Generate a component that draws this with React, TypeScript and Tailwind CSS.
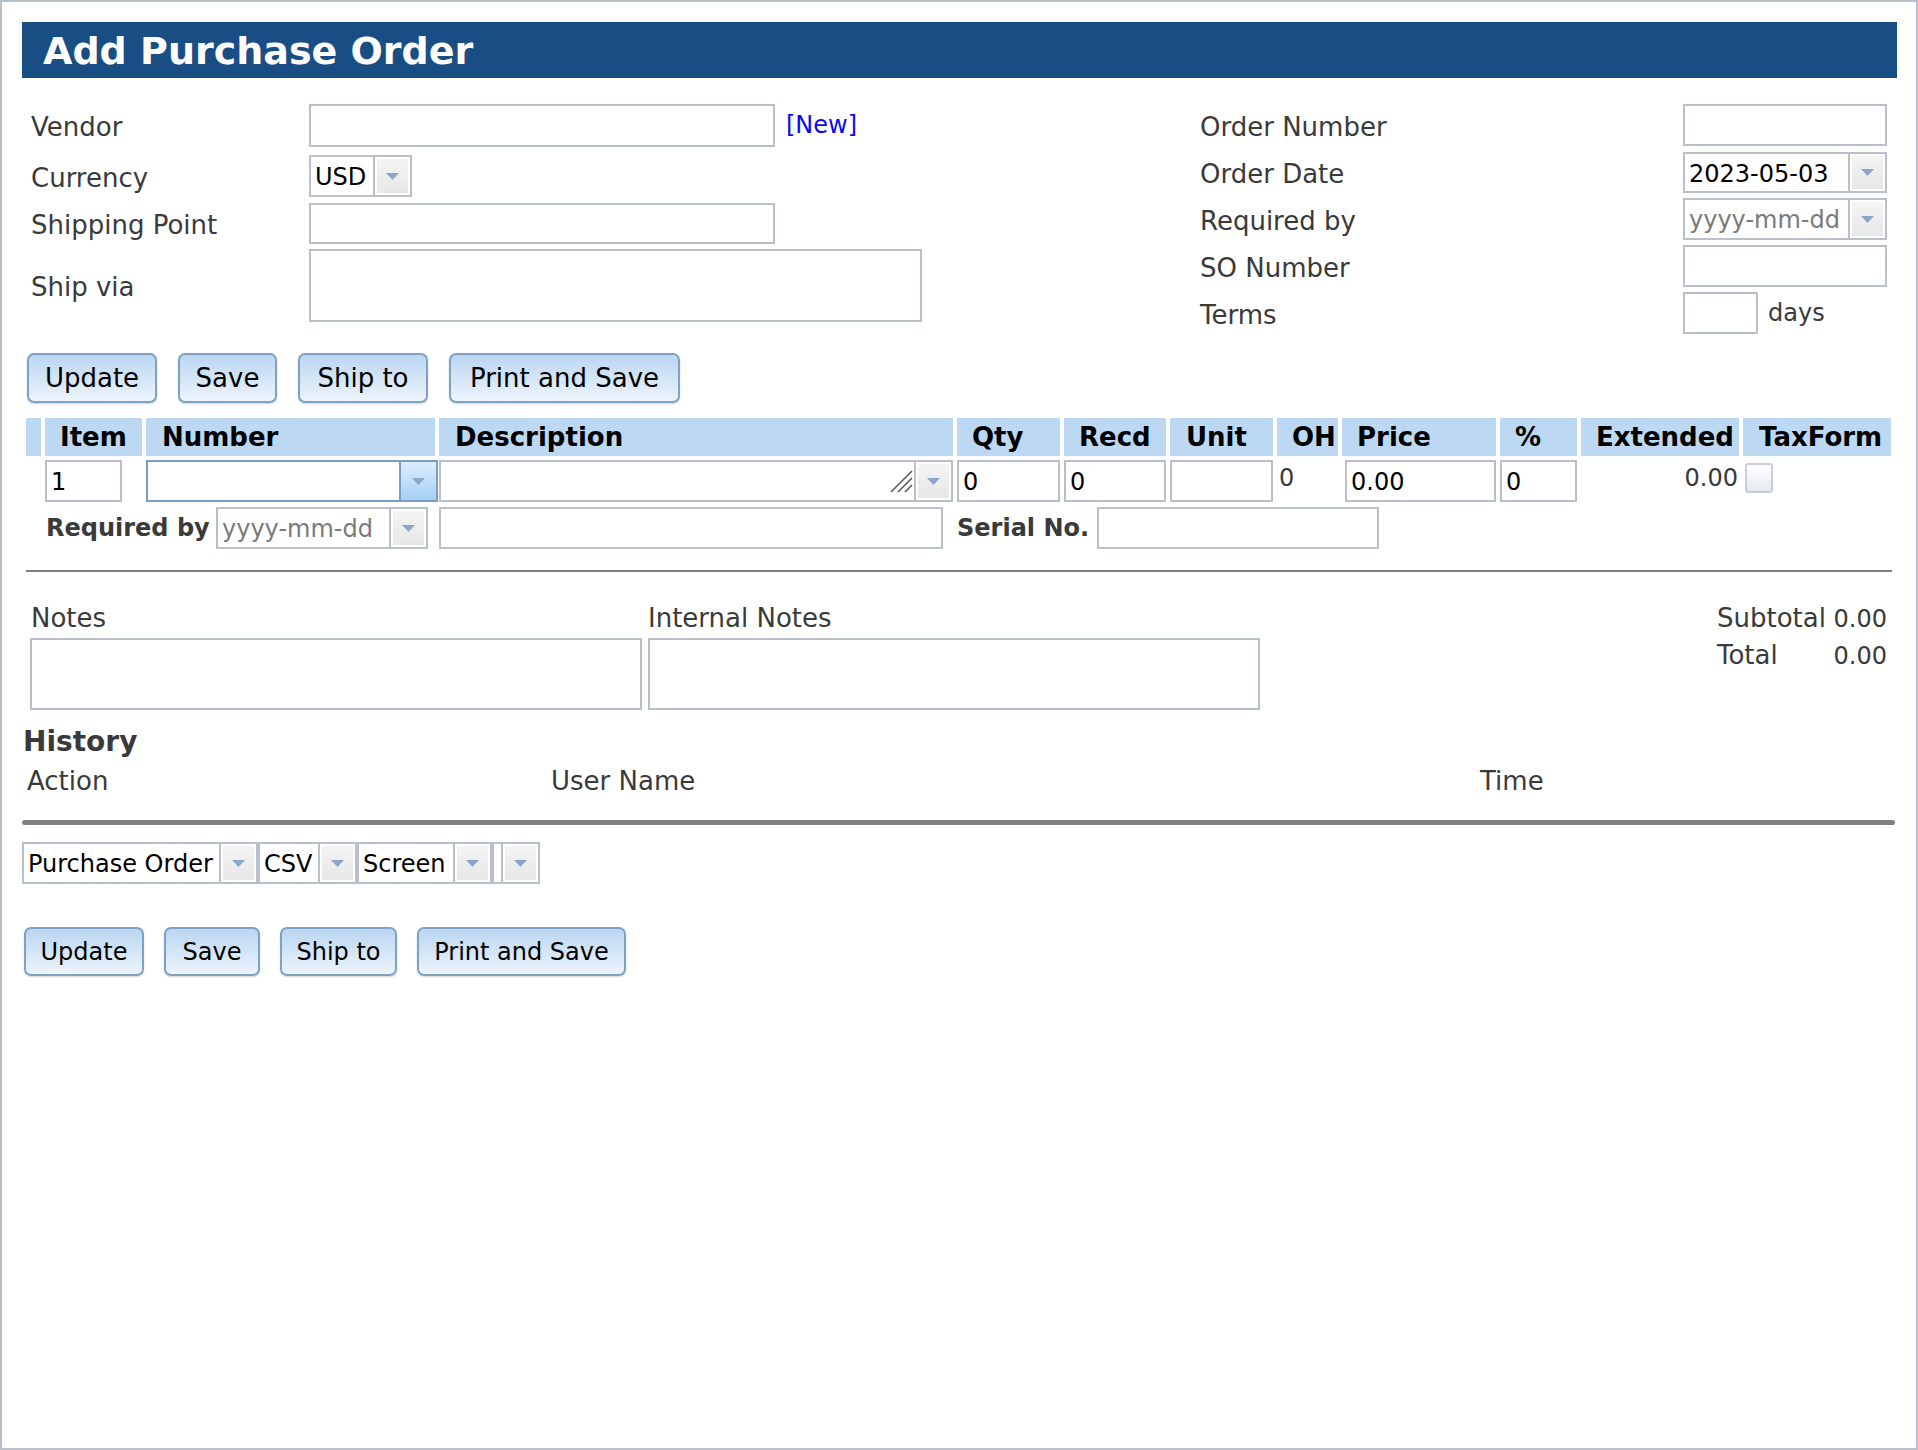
import type { ReactNode } from 'react';

function Arrow() {
    return (
        <svg width="13" height="7" viewBox="0 0 13 7">
            <path d="M0 0h13L6.5 7z" fill="#8ea5ca" />
        </svg>
    );
}

function DropButton({ active }: { active?: boolean }) {
    if (active) {
        return (
            <div className="flex h-full w-[37px] shrink-0 items-center justify-center border-l-2 border-[#7b9dc1] bg-gradient-to-b from-[#dbeefe] to-[#a6d0f6]">
                <Arrow />
            </div>
        );
    }
    return (
        <div className="flex h-full w-[37px] shrink-0 border-l-2 border-[#b9c0cc] bg-white p-[2px]">
            <div className="flex flex-1 items-center justify-center bg-gradient-to-b from-[#f4f4f4] to-[#e7e7e7]">
                <Arrow />
            </div>
        </div>
    );
}

function Field({ className, children }: { className: string; children?: ReactNode }) {
    return (
        <div
            className={
                'flex shrink-0 items-center border-2 border-[#b9c0cc] bg-white pt-[2px] pl-[4px] text-[24px] leading-[28px] whitespace-nowrap text-black ' +
                className
            }
        >
            {children}
        </div>
    );
}

function Combo({
    className,
    value,
    placeholder,
    active,
    grip,
}: {
    className: string;
    value?: string;
    placeholder?: string;
    active?: boolean;
    grip?: boolean;
}) {
    return (
        <div
            className={
                'flex shrink-0 border-2 bg-white text-[24px] leading-[28px] whitespace-nowrap ' +
                (active ? 'border-[#7b9dc1] ' : 'border-[#b9c0cc] ') +
                className
            }
        >
            <div className="relative flex flex-1 items-center overflow-hidden pt-[2px] pl-[4px]">
                {value && <span className="text-black">{value}</span>}
                {placeholder && <span className="text-[#7a7a7a]">{placeholder}</span>}
                {grip && (
                    <svg
                        className="absolute right-[1px] bottom-[7px]"
                        width="25"
                        height="25"
                        viewBox="0 0 25 25"
                    >
                        <path
                            d="M24 3L3 24M24 10L10 24M24 17L17 24"
                            stroke="#5a5a5a"
                            strokeWidth="1.6"
                        />
                    </svg>
                )}
            </div>
            <DropButton active={active} />
        </div>
    );
}

function Btn({ className, children }: { className: string; children: ReactNode }) {
    return (
        <button
            className={
                'flex shrink-0 items-center justify-center rounded-[7px] border-2 border-[#7ea2c6] bg-gradient-to-b from-[#bad6f1] to-[#edf4fc] whitespace-nowrap text-black shadow-[0_1px_2px_rgba(0,0,0,0.18)] ' +
                className
            }
        >
            {children}
        </button>
    );
}

function Th({ className, children }: { className: string; children?: ReactNode }) {
    return (
        <div
            className={
                'h-[38px] shrink-0 bg-[#bdd8f3] pl-[15px] text-[26px] leading-[38px] font-bold whitespace-nowrap text-black ' +
                className
            }
        >
            {children}
        </div>
    );
}

export default function App() {
    return (
        <div className="h-[1450px] w-[1918px] border-2 border-[#b9c0cc] bg-white font-['DejaVu_Sans',sans-serif] text-[#3a3a3a]">
            <div className="pt-[20px] pr-[19px] pl-[20px]">
                {/* Title bar */}
                <h1 className="h-[56px] bg-[#194e85] pt-[2px] pl-[21px] text-[38px] leading-[54px] font-bold text-white">
                    Add Purchase Order
                </h1>

                {/* Header form */}
                <div className="mt-[26px] flex items-start">
                    <div className="w-[1178px] text-[26px] leading-[30px]">
                        <div className="flex h-[43px] items-center">
                            <div className="ml-[9px] w-[278px] pt-[3px]">Vendor</div>
                            <Field className="h-[43px] w-[466px]" />
                            <a className="mt-[7px] ml-[11px] self-start text-[24px] leading-[28px] text-[#0a0af0]">
                                [New]
                            </a>
                        </div>
                        <div className="mt-[8px] flex h-[42px] items-center">
                            <div className="ml-[9px] w-[278px] pt-[3px]">Currency</div>
                            <Combo className="h-[42px] w-[103px]" value="USD" />
                        </div>
                        <div className="mt-[6px] flex h-[41px] items-center">
                            <div className="ml-[9px] w-[278px] pt-[3px]">Shipping Point</div>
                            <Field className="h-[41px] w-[466px]" />
                        </div>
                        <div className="mt-[5px] flex h-[73px] items-center">
                            <div className="ml-[9px] w-[278px] pt-[3px]">Ship via</div>
                            <Field className="h-[73px] w-[613px]" />
                        </div>
                    </div>

                    <div className="text-[26px] leading-[30px]">
                        <div className="flex h-[42px] items-center">
                            <div className="w-[483px] pt-[3px]">Order Number</div>
                            <Field className="h-[42px] w-[204px]" />
                        </div>
                        <div className="mt-[6px] flex h-[41px] items-center">
                            <div className="w-[483px] pt-[3px]">Order Date</div>
                            <Combo className="h-[41px] w-[204px]" value="2023-05-03" />
                        </div>
                        <div className="mt-[5px] flex h-[42px] items-center">
                            <div className="w-[483px] pt-[3px]">Required by</div>
                            <Combo className="h-[42px] w-[204px]" placeholder="yyyy-mm-dd" />
                        </div>
                        <div className="mt-[5px] flex h-[42px] items-center">
                            <div className="w-[483px] pt-[3px]">SO Number</div>
                            <Field className="h-[42px] w-[204px]" />
                        </div>
                        <div className="mt-[5px] flex h-[42px] items-center">
                            <div className="w-[483px] pt-[3px]">Terms</div>
                            <Field className="h-[42px] w-[75px]" />
                            <span className="ml-[10px] text-[24px] leading-[28px]">days</span>
                        </div>
                    </div>
                </div>

                {/* Top buttons */}
                <div className="mt-[19px] ml-[5px] flex gap-[21px] text-[26px]">
                    <Btn className="h-[50px] w-[130px]">Update</Btn>
                    <Btn className="h-[50px] w-[99px]">Save</Btn>
                    <Btn className="h-[50px] w-[130px]">Ship to</Btn>
                    <Btn className="h-[50px] w-[231px]">Print and Save</Btn>
                </div>

                {/* Line items */}
                <div className="mt-[15px] ml-[4px]">
                    <div className="flex gap-[4px]">
                        <Th className="w-[15px] pl-0" />
                        <Th className="w-[97px]">Item</Th>
                        <Th className="w-[289px] pl-[16px]">Number</Th>
                        <Th className="w-[514px] pl-[16px]">Description</Th>
                        <Th className="w-[103px] pl-[14px]">Qty</Th>
                        <Th className="w-[102px]">Recd</Th>
                        <Th className="w-[103px] pl-[16px]">Unit</Th>
                        <Th className="w-[61px]">OH</Th>
                        <Th className="w-[154px]">Price</Th>
                        <Th className="w-[77px]">%</Th>
                        <Th className="w-[158px]">Extended</Th>
                        <Th className="w-[148px] pl-[16px]">TaxForm</Th>
                    </div>

                    <div className="mt-[4px] flex h-[42px] gap-[4px]">
                        <div className="w-[15px] shrink-0" />
                        <div className="w-[97px] shrink-0">
                            <Field className="h-[42px] w-[77px]">1</Field>
                        </div>
                        <Combo className="h-[42px] w-[292px]" active />
                        <Combo className="-ml-[3px] h-[42px] w-[514px]" grip />
                        <Field className="h-[42px] w-[103px]">0</Field>
                        <Field className="h-[42px] w-[102px]">0</Field>
                        <Field className="h-[42px] w-[103px]" />
                        <div className="w-[61px] shrink-0 pt-[4px] pl-[2px] text-[24px] leading-[28px]">0</div>
                        <Field className="ml-[3px] h-[42px] w-[151px]">0.00</Field>
                        <Field className="h-[42px] w-[77px]">0</Field>
                        <div className="w-[158px] shrink-0 pt-[4px] pr-[1px] text-right text-[24px] leading-[28px]">
                            0.00
                        </div>
                        <div className="w-[148px] shrink-0 pt-[3px] pl-[2px]">
                            <div className="h-[30px] w-[28px] rounded-[3px] border-2 border-[#c8ced8] bg-gradient-to-b from-white to-[#e3e9f1]" />
                        </div>
                    </div>

                    <div className="mt-[5px] flex h-[42px] items-center text-[24px] leading-[28px] font-bold">
                        <div className="ml-[20px] w-[170px] shrink-0">Required by</div>
                        <Combo className="h-[42px] w-[212px] font-normal" placeholder="yyyy-mm-dd" />
                        <Field className="ml-[11px] h-[42px] w-[504px]" />
                        <div className="ml-[14px] w-[140px] shrink-0">Serial No.</div>
                        <Field className="h-[42px] w-[282px]" />
                    </div>

                    <div className="mt-[21px] h-[2px] w-[1866px] bg-[#808080]" />
                </div>

                {/* Notes and totals */}
                <div className="mt-[31px] flex items-start">
                    <div className="ml-[8px] w-[612px] shrink-0">
                        <div className="pl-[1px] text-[26px] leading-[30px]">Notes</div>
                        <Field className="mt-[5px] h-[72px] w-[612px]" />
                    </div>
                    <div className="ml-[6px] w-[612px] shrink-0">
                        <div className="text-[26px] leading-[30px]">Internal Notes</div>
                        <Field className="mt-[5px] h-[72px] w-[612px]" />
                    </div>
                    <div className="ml-[457px] w-[170px] shrink-0">
                        <div className="flex items-baseline">
                            <span className="w-[116px] text-[26px] leading-[30px]">Subtotal</span>
                            <span className="flex-1 text-right text-[24px] leading-[28px]">0.00</span>
                        </div>
                        <div className="mt-[7px] flex items-baseline">
                            <span className="w-[116px] text-[26px] leading-[30px]">Total</span>
                            <span className="flex-1 text-right text-[24px] leading-[28px]">0.00</span>
                        </div>
                    </div>
                </div>

                {/* History */}
                <h2 className="mt-[16px] ml-[1px] text-[28px] leading-[32px] font-bold">History</h2>
                <div className="mt-[8px] ml-[5px] flex text-[26px] leading-[30px]">
                    <div className="w-[524px]">Action</div>
                    <div className="w-[929px]">User Name</div>
                    <div>Time</div>
                </div>
                <div className="mt-[24px] h-[5px] w-[1873px] rounded-full bg-[#808080]" />

                {/* Print options */}
                <div className="mt-[17px] flex h-[42px]">
                    <Combo className="h-[42px] w-[236px]" value="Purchase Order" />
                    <Combo className="h-[42px] w-[99px]" value="CSV" />
                    <Combo className="h-[42px] w-[135px]" value="Screen" />
                    <Combo className="h-[42px] w-[48px]" />
                </div>

                {/* Bottom buttons */}
                <div className="mt-[43px] ml-[2px] flex gap-[20px] text-[24px]">
                    <Btn className="h-[49px] w-[120px]">Update</Btn>
                    <Btn className="h-[49px] w-[96px]">Save</Btn>
                    <Btn className="h-[49px] w-[117px]">Ship to</Btn>
                    <Btn className="h-[49px] w-[209px]">Print and Save</Btn>
                </div>
            </div>
        </div>
    );
}
